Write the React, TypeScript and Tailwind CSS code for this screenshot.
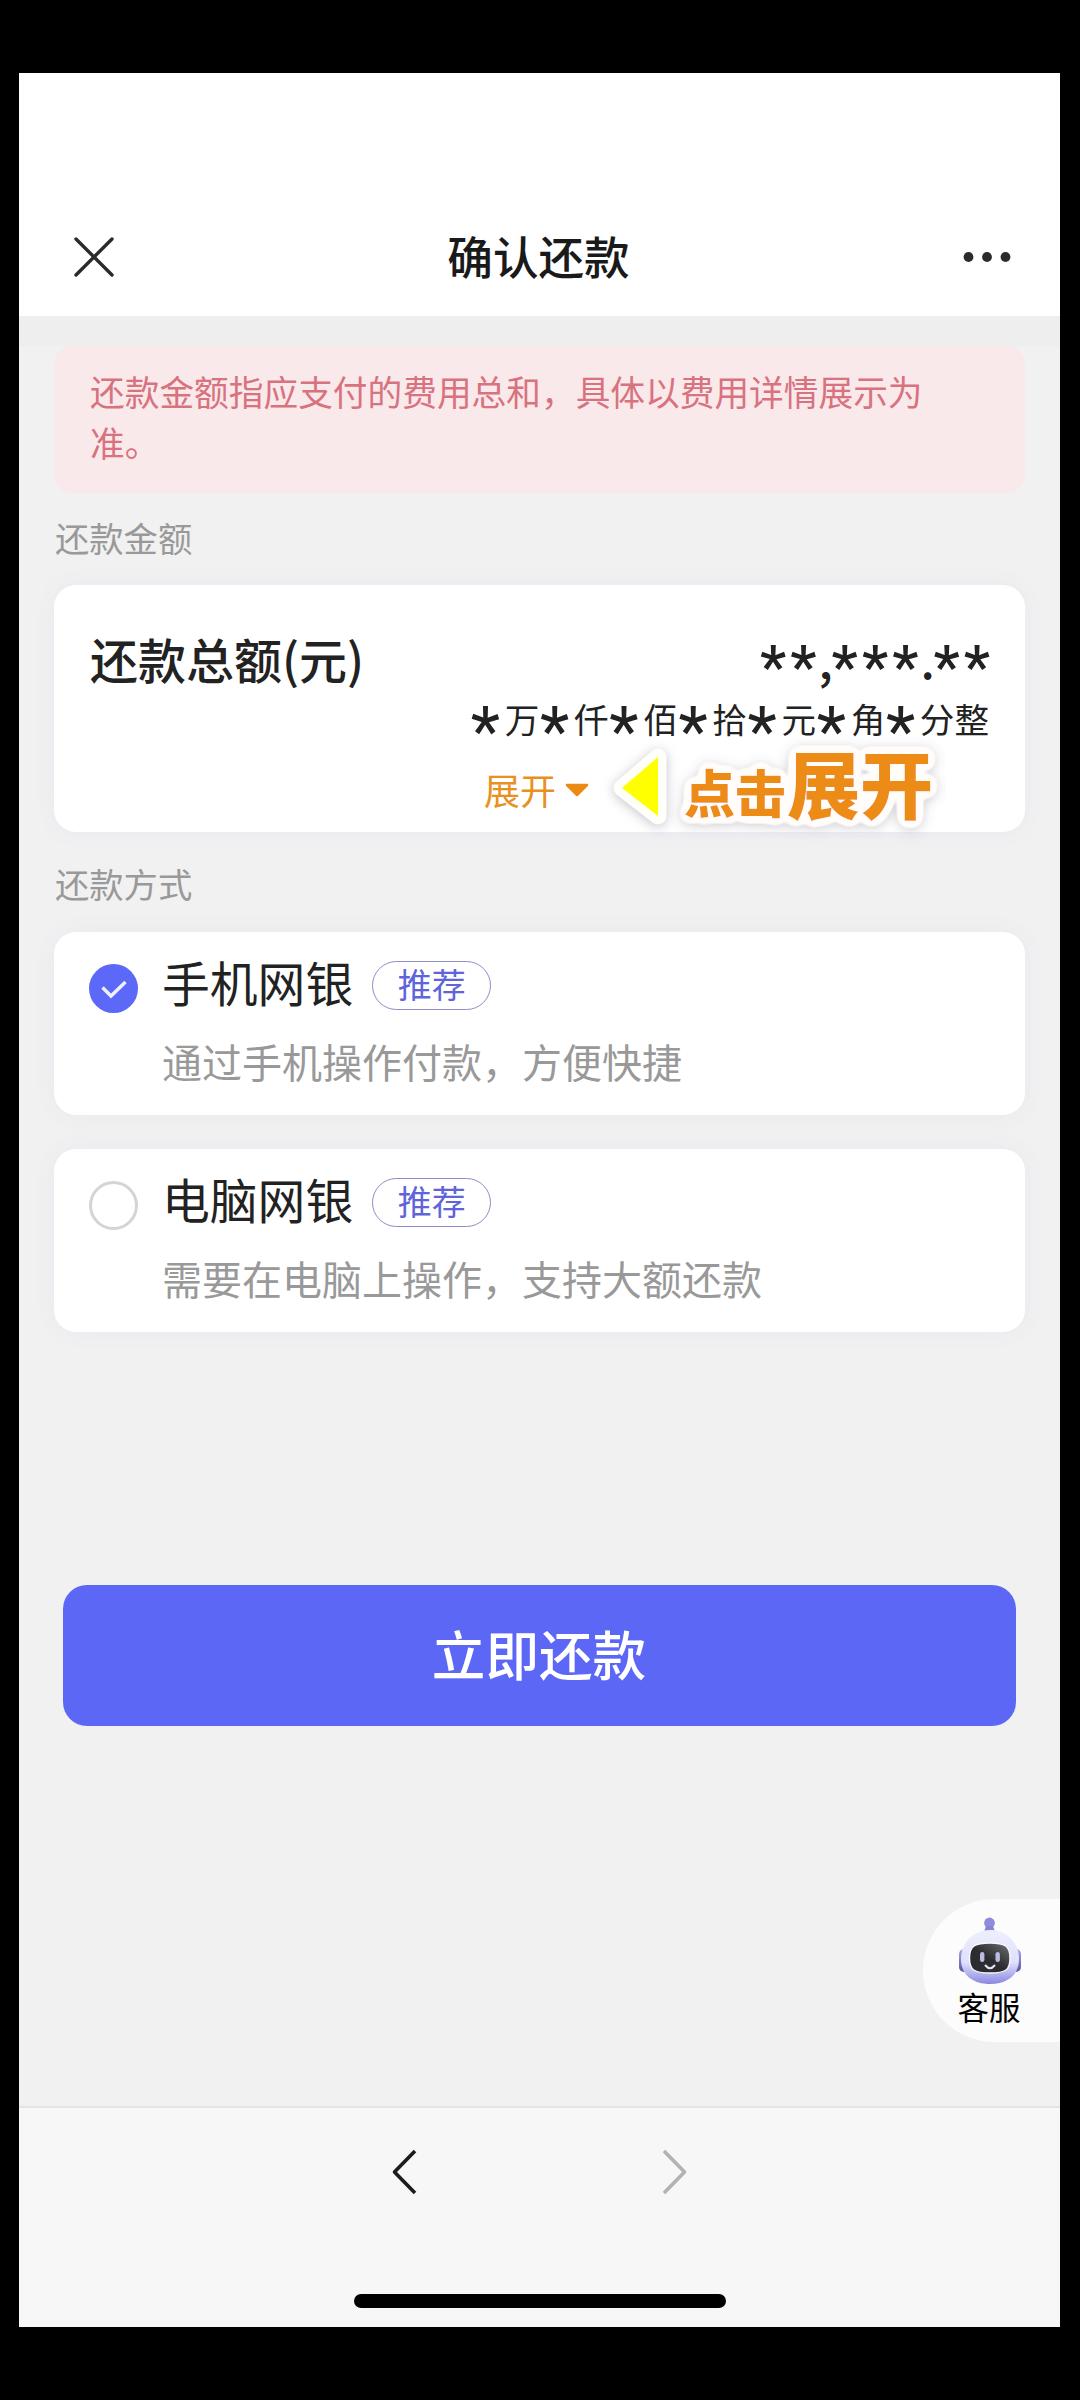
import React, { useState } from "react";

const methods = [
  {
    id: "mobile",
    title: "手机网银",
    tag: "推荐",
    desc: "通过手机操作付款，方便快捷",
  },
  {
    id: "pc",
    title: "电脑网银",
    tag: "推荐",
    desc: "需要在电脑上操作，支持大额还款",
  },
];

const units = ["万", "仟", "佰", "拾", "元", "角", "分"];

const Header = () => (
  <div className="h-[243px] bg-white flex items-end shrink-0">
    <div className="h-[119px] w-full flex items-center justify-between pl-[54px] pr-[48px] mb-px">
      <svg className="w-[42px] h-[42px] mt-[2px]" viewBox="0 0 42 42" fill="none">
        <path
          d="M3 3L39 39M39 3L3 39"
          stroke="#2b2b2b"
          strokeWidth="3.4"
          strokeLinecap="round"
        />
      </svg>
      <div className="text-[45.6px] leading-[60px] font-medium text-[#1a1a1a] -mt-[2px]">
        确认还款
      </div>
      <svg className="w-[50px] h-[12px] mt-[2px]" viewBox="0 0 50 12" fill="#2b2b2b">
        <circle cx="6.5" cy="6" r="4.9" />
        <circle cx="25" cy="6" r="4.9" />
        <circle cx="43.5" cy="6" r="4.9" />
      </svg>
    </div>
  </div>
);

const Star = () => (
  <span className="inline-block w-[34.6px] h-[50px] text-center text-[68px] leading-[79px] align-top font-['Roboto',sans-serif] -ml-[2px] mr-[2px]">
    *
  </span>
);

const AmountCard = () => (
  <div className="relative h-[247px] rounded-[22px] bg-white px-[36px] pt-[44px] shadow-[0_0_24px_rgba(90,90,255,0.05)]">
    <div className="flex justify-between h-[60px] text-[#222] font-medium">
      <div className="text-[48px] leading-[58px] whitespace-nowrap">
        还款总额(元)
      </div>
      <div className="flex text-[48px] leading-[58px] -mr-[3px]">
        {"**,***.**".split("").map((c, i) =>
          c === "*" ? (
            <span
              key={i}
              className="w-[30.3px] text-center text-[59px] leading-[75px] font-['Roboto',sans-serif]"
            >
              {c}
            </span>
          ) : (
            <span key={i} className="w-[11px] text-center">
              {c}
            </span>
          )
        )}
      </div>
    </div>
    <div className="flex justify-end h-[50px] mt-[4px] text-[34.6px] leading-[50px] text-[#222] whitespace-nowrap">
      {units.map((u) => (
        <span key={u}>
          <Star />
          {u}
        </span>
      ))}
      <span>整</span>
    </div>
    <div className="flex items-center h-[50px] mt-[22px] ml-[394px] text-[#e8911f]">
      <span className="text-[36px] leading-[50px] -mt-[3px]">展开</span>
      <svg className="w-[24px] h-[14px] ml-[9px]" viewBox="0 0 24 14">
        <path
          d="M2 2H22L12 12Z"
          fill="#ea8a12"
          stroke="#ea8a12"
          strokeWidth="2.5"
          strokeLinejoin="round"
        />
      </svg>
    </div>

    {/* hint sticker */}
    <svg
      className="absolute left-[546px] top-[145px] w-[360px] h-[130px] overflow-visible"
      viewBox="0 0 360 130"
    >
      <defs>
        <filter id="sticker" x="-5%" y="-10%" width="110%" height="130%">
          <feGaussianBlur in="SourceAlpha" stdDeviation="5" result="b" />
          <feComponentTransfer in="b" result="fat">
            <feFuncA type="linear" slope="24" intercept="-0.7" />
          </feComponentTransfer>
          <feFlood floodColor="#fffcf9" />
          <feComposite in2="fat" operator="in" result="edge" />
          <feGaussianBlur in="fat" stdDeviation="6" />
          <feOffset dy="2" result="sb" />
          <feFlood floodColor="#5a5a70" floodOpacity="0.3" />
          <feComposite in2="sb" operator="in" result="shadow" />
          <feMerge>
            <feMergeNode in="shadow" />
            <feMergeNode in="edge" />
            <feMergeNode in="SourceGraphic" />
          </feMerge>
        </filter>
      </defs>
      <path
        d="M22 58L58 27V86Z"
        fill="#ffff00"
        stroke="#fffffa"
        strokeWidth="17"
        strokeLinejoin="round"
        className="[paint-order:stroke] drop-shadow-[0_2px_6px_rgba(90,90,112,0.35)]"
      />
      <g filter="url(#sticker)">
        <text
          x="84"
          y="83"
          fill="#ec8c14"
          fontSize="51"
          fontWeight="900"
          className="font-['Noto_Sans_CJK_SC',sans-serif]"
        >
          点击
          <tspan x="187" y="83" fontSize="73">
            展开
          </tspan>
        </text>
      </g>
    </svg>
  </div>
);

const Radio = ({ checked }: any) =>
  checked ? (
    <div className="w-[49px] h-[49px] rounded-full bg-[#5b68f8] flex items-center justify-center">
      <svg className="w-[28px] h-[20px]" viewBox="0 0 28 20" fill="none">
        <path d="M2.5 8.5L11 17L25.5 3" stroke="#eef0ff" strokeWidth="3.4" />
      </svg>
    </div>
  ) : (
    <div className="w-[49px] h-[49px] rounded-full border-3 border-[#d4d4d4] bg-white" />
  );

const Method = ({ item, checked, onSelect }: any) => (
  <div
    onClick={onSelect}
    className="h-[183px] rounded-[22px] bg-white flex pl-[35px] shadow-[0_0_24px_rgba(90,90,255,0.05)]"
  >
    <div className="pt-[32px]">
      <Radio checked={checked} />
    </div>
    <div className="pl-[24px] pt-[19px]">
      <div className="flex items-center h-[66px]">
        <span className="text-[47.8px] leading-[60px] text-[#222] -mt-[5px]">
          {item.title}
        </span>
        <span className="ml-[19px] mt-[2px] w-[119px] h-[49px] rounded-full border border-[#8c8dc4] text-[34px] leading-[44px] text-center text-[#6064da]">
          {item.tag}
        </span>
      </div>
      <div className="mt-[18px] text-[40px] leading-[52px] text-[#999] whitespace-nowrap">
        {item.desc}
      </div>
    </div>
  </div>
);

const Robot = () => (
  <svg className="w-[66px] h-[70px]" viewBox="0 0 66 70">
    <defs>
      <linearGradient id="head" x1="0" y1="0" x2="0" y2="1">
        <stop offset="0" stopColor="#eeeffd" />
        <stop offset="0.6" stopColor="#dfe0fb" />
        <stop offset="1" stopColor="#8b88e2" />
      </linearGradient>
      <linearGradient id="ear" x1="0" y1="0" x2="0" y2="1">
        <stop offset="0" stopColor="#a9a8ee" />
        <stop offset="1" stopColor="#55569c" />
      </linearGradient>
      <linearGradient id="face" x1="0" y1="1" x2="0.9" y2="0">
        <stop offset="0.5" stopColor="#2c2c2e" />
        <stop offset="0.85" stopColor="#565758" />
        <stop offset="1" stopColor="#77787a" />
      </linearGradient>
    </defs>
    <rect x="2" y="33" width="10" height="23" rx="5" fill="url(#ear)" />
    <rect x="54" y="33" width="10" height="23" rx="5" fill="url(#ear)" />
    <circle cx="32.5" cy="7" r="5.4" fill="#8f8ddb" />
    <path d="M29 10H36L38.5 17H26.5Z" fill="#8886d4" />
    <path
      d="M33 14C50 14 62 27 62 43C62 60 49 68 33 68C17 68 4 60 4 43C4 27 16 14 33 14Z"
      fill="url(#head)"
    />
    <path
      d="M33 27C47 27 53 29 53 42C53 54 49 57 33 57C17 57 12.5 54 12.5 42C12.5 29 19 27 33 27Z"
      fill="url(#face)"
      stroke="#f7f7ff"
      strokeWidth="1.4"
    />
    <rect x="23" y="36" width="4.4" height="10" rx="2.2" fill="#b9bbe0" />
    <rect x="38.5" y="36" width="4.4" height="10" rx="2.2" fill="#b9bbe0" />
    <path
      d="M28.5 49.5Q33 55 37.5 49.5"
      fill="none"
      stroke="#e4e4f4"
      strokeWidth="2"
      strokeLinecap="round"
    />
  </svg>
);

const Footer = () => (
  <div className="h-[221px] shrink-0 bg-[#f7f7f7] border-t-2 border-[#e4e4e4] flex flex-col items-center">
    <div className="flex justify-center gap-[243px] mt-[39px]">
      <svg className="w-[28px] h-[50px]" viewBox="0 0 28 50" fill="none">
        <path
          d="M25 4L4.5 25L25 46"
          stroke="#1c1c1c"
          strokeWidth="3.6"
          strokeLinejoin="round"
        />
      </svg>
      <svg className="w-[28px] h-[50px]" viewBox="0 0 28 50" fill="none">
        <path
          d="M3 4L23.5 25L3 46"
          stroke="#b2b2b2"
          strokeWidth="3.6"
          strokeLinejoin="round"
        />
      </svg>
    </div>
    <div className="w-[372px] h-[14px] rounded-full bg-black mt-[97px]" />
  </div>
);

const App = () => {
  const [selected, setSelected] = useState<string>("mobile");

  return (
    <div className="w-[1080px] h-[2400px] bg-black pl-[19px] pt-[73px] overflow-hidden font-['Noto_Sans_CJK_SC',sans-serif]">
      <div className="w-[1041px] h-[2254px] bg-[#f1f1f1] flex flex-col">
        <Header />
        <div className="h-[30px] bg-[#eeeeee] shrink-0" />
        <div className="flex-1 pl-[35px] pr-[35px]">
          <div className="h-[147px] rounded-[18px] bg-[#fae9ea] pl-[36px] pr-[80px] pt-[20px] text-[34.7px] leading-[51px] text-[#d8727f]">
            还款金额指应支付的费用总和，具体以费用详情展示为准。
          </div>
          <div className="h-[92px] pl-px pt-[19px] text-[34.3px] leading-[50px] text-[#999]">
            还款金额
          </div>
          <AmountCard />
          <div className="h-[100px] pl-px pt-[26px] text-[34.3px] leading-[50px] text-[#999]">
            还款方式
          </div>
          <div className="flex flex-col gap-[34px]">
            {methods.map((item) => (
              <Method
                key={item.id}
                item={item}
                checked={selected === item.id}
                onSelect={() => setSelected(item.id)}
              />
            ))}
          </div>
          <button className="block mt-[253px] ml-[9px] w-[953px] h-[141px] rounded-[24px] bg-[#5c67f6] text-white text-[53.6px] leading-[60px] font-medium pb-[6px] pr-px">
            立即还款
          </button>
          <div className="mt-[173px] ml-auto -mr-[35px] w-[137px] h-[143px] rounded-l-full bg-[#fcfcfc] flex flex-col items-center pt-[17px] pr-[3px]">
            <Robot />
            <div className="text-[31.5px] leading-[40px] text-black -ml-[2px]">
              客服
            </div>
          </div>
        </div>
        <Footer />
      </div>
    </div>
  );
};

export default App;
